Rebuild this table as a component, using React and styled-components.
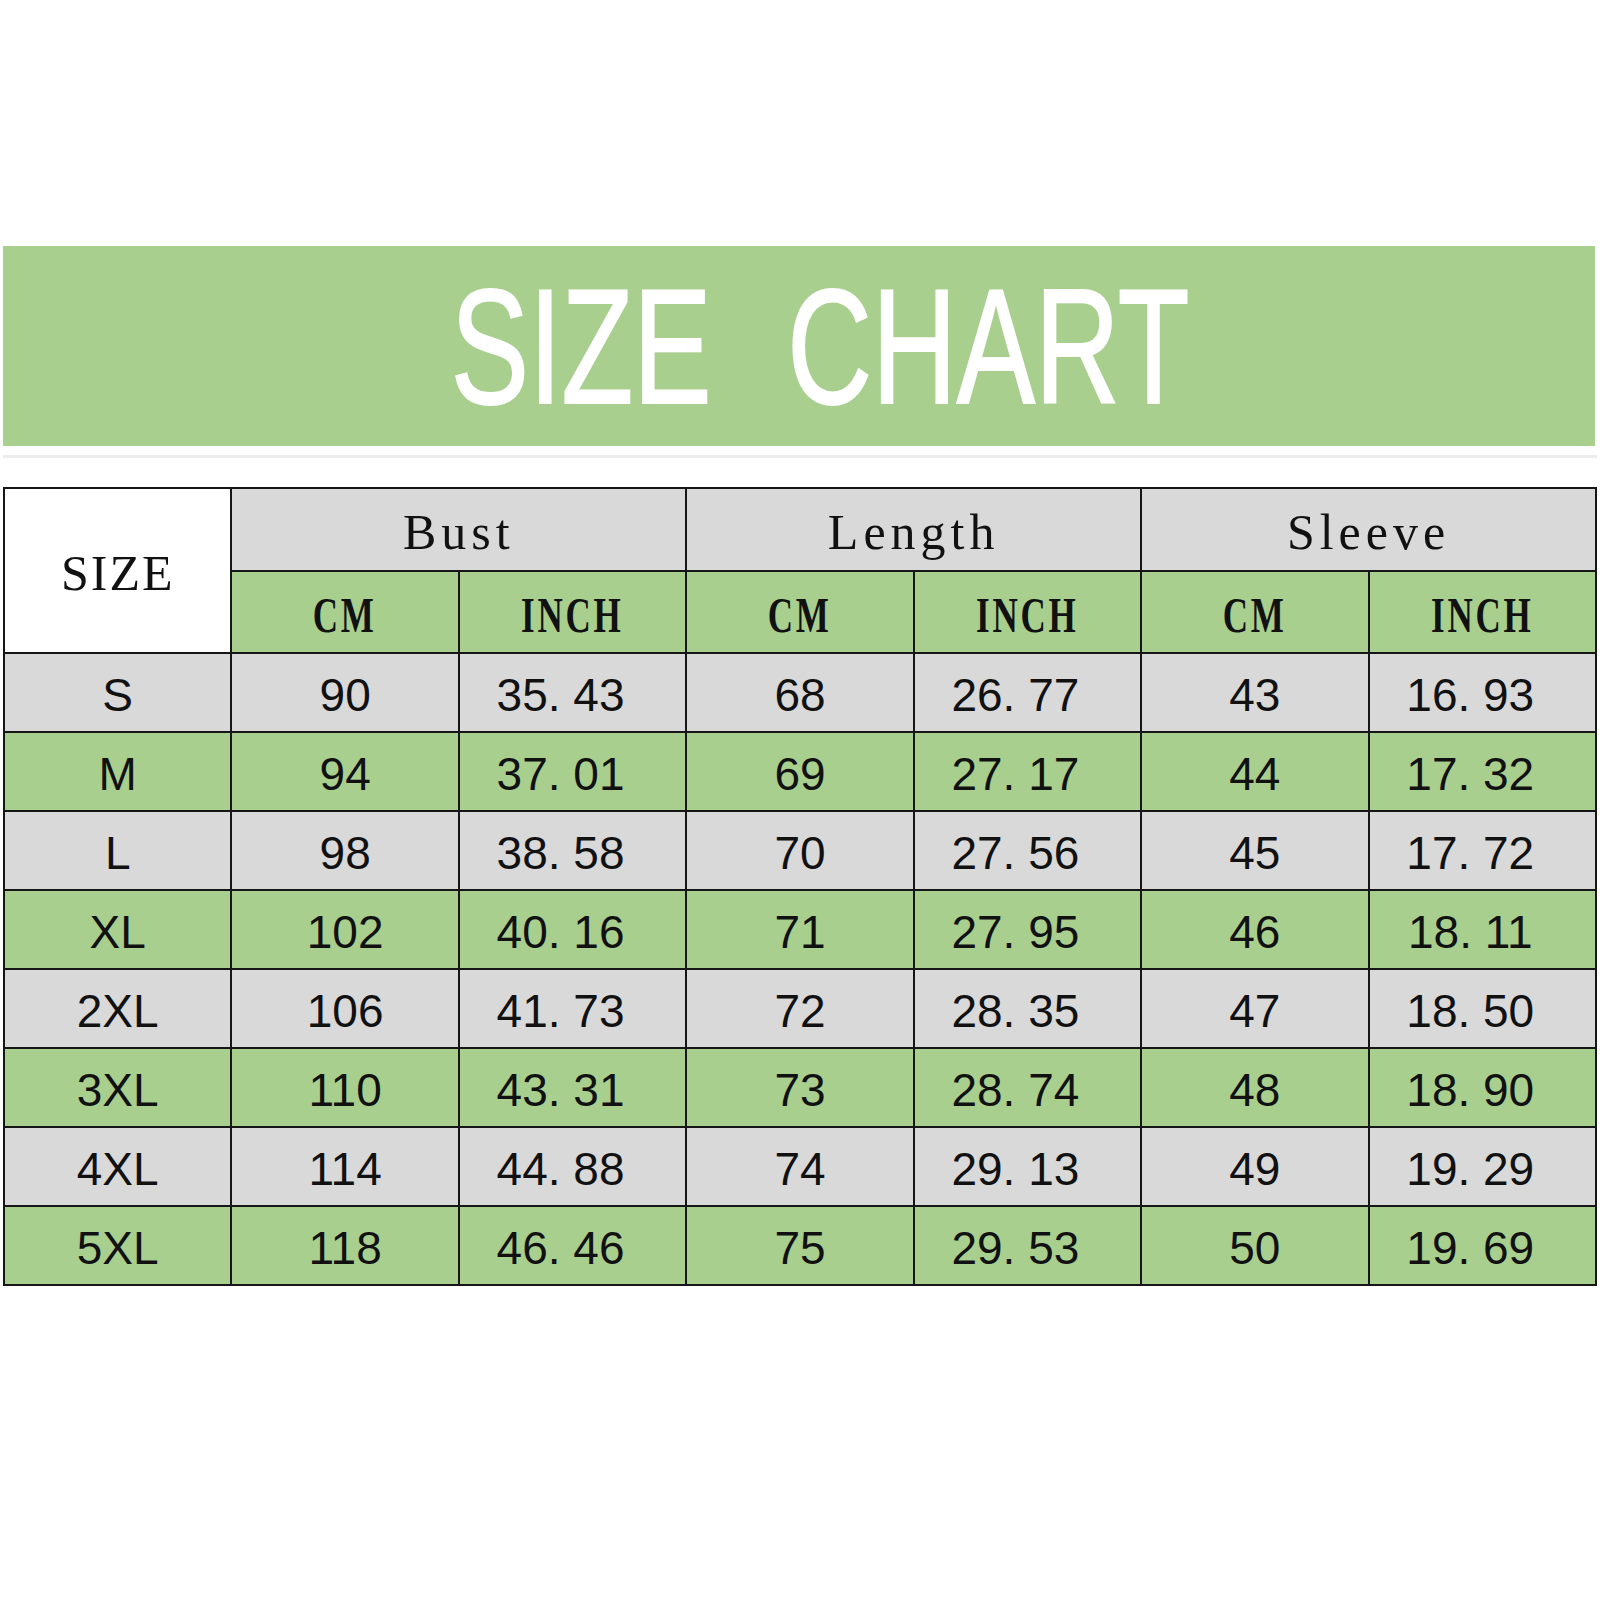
import React from 'react';
import styled, { createGlobalStyle } from 'styled-components';

const GlobalStyle = createGlobalStyle`
  html, body {
    margin: 0;
    padding: 0;
    background: #fff;
  }
`;

const GREEN = '#a9cf8e';
const GRAY = '#d9d9d9';
const LINE = '#161616';

const Page = styled.div`
  width: 1600px;
  height: 1600px;
  box-sizing: border-box;
  padding: 246px 3px 0;
  display: flex;
  flex-direction: column;
`;

const Banner = styled.div`
  height: 200px;
  margin-right: 2px;
  background: ${GREEN};
  display: flex;
  align-items: center;
  justify-content: center;
  padding-left: 42px;
`;

const Title = styled.h1`
  display: inline-block;
  margin: 0;
  color: #fff;
  font-family: 'Liberation Sans', Arial, sans-serif;
  font-weight: 400;
  font-size: 163px;
  line-height: 1;
  word-spacing: 60px;
  transform: scaleX(0.72);
  -webkit-text-stroke: 2px #fff;
`;

const Divider = styled.div`
  height: 3px;
  margin-top: 9px;
  background: #ececec;
`;

const Table = styled.table`
  margin-top: 29px;
  width: 1594px;
  table-layout: fixed;
  border-collapse: collapse;
  border: 2px solid ${LINE};
`;

const Cell = styled.td`
  border: 2px solid ${LINE};
  background: ${(p) => p.$bg};
  text-align: center;
  vertical-align: middle;
  color: #111;
  padding: 0;
  font-weight: 400;
`;

const HeadCell = styled(Cell)`
  height: 77px;
  padding-top: 4px;
  font-family: 'Liberation Serif', 'Times New Roman', serif;
  font-size: 50px;
  letter-spacing: 5px;
`;

const SizeHead = styled(Cell)`
  font-family: 'Liberation Serif', 'Times New Roman', serif;
  font-size: 50px;
  letter-spacing: 2px;
  padding-top: 4px;
`;

const UnitCell = styled(Cell)`
  height: 74px;
  padding-top: 6px;
`;

const Unit = styled.span`
  display: inline-block;
  font-family: 'Liberation Serif', 'Times New Roman', serif;
  font-weight: 700;
  font-size: 50px;
  letter-spacing: 4px;
  transform: scaleX(0.7);
`;

const DataCell = styled(Cell)`
  height: 73px;
  padding-top: 4px;
  padding-right: ${(p) => (p.$inch ? '24px' : '0')};
  font-family: 'Liberation Sans', Arial, sans-serif;
  font-size: 46px;
`;

const rows = [
  ['S', '90', '35. 43', '68', '26. 77', '43', '16. 93'],
  ['M', '94', '37. 01', '69', '27. 17', '44', '17. 32'],
  ['L', '98', '38. 58', '70', '27. 56', '45', '17. 72'],
  ['XL', '102', '40. 16', '71', '27. 95', '46', '18. 11'],
  ['2XL', '106', '41. 73', '72', '28. 35', '47', '18. 50'],
  ['3XL', '110', '43. 31', '73', '28. 74', '48', '18. 90'],
  ['4XL', '114', '44. 88', '74', '29. 13', '49', '19. 29'],
  ['5XL', '118', '46. 46', '75', '29. 53', '50', '19. 69'],
];

const groups = ['Bust', 'Length', 'Sleeve'];

const App = () => (
  <>
    <GlobalStyle />
    <Page>
      <Banner>
        <Title>SIZE CHART</Title>
      </Banner>
      <Divider />
      <Table>
        <tbody>
          <tr>
            <SizeHead as="th" rowSpan={2} $bg="#fff">
              SIZE
            </SizeHead>
            {groups.map((g) => (
              <HeadCell as="th" key={g} colSpan={2} $bg={GRAY}>
                {g}
              </HeadCell>
            ))}
          </tr>
          <tr>
            {groups.map((g) => (
              <React.Fragment key={g}>
                <UnitCell as="th" $bg={GREEN}>
                  <Unit>CM</Unit>
                </UnitCell>
                <UnitCell as="th" $bg={GREEN}>
                  <Unit>INCH</Unit>
                </UnitCell>
              </React.Fragment>
            ))}
          </tr>
          {rows.map((r, i) => (
            <tr key={r[0]}>
              {r.map((v, j) => (
                <DataCell key={j} $bg={i % 2 ? GREEN : GRAY} $inch={j > 0 && j % 2 === 0}>
                  {v}
                </DataCell>
              ))}
            </tr>
          ))}
        </tbody>
      </Table>
    </Page>
  </>
);

export default App;
